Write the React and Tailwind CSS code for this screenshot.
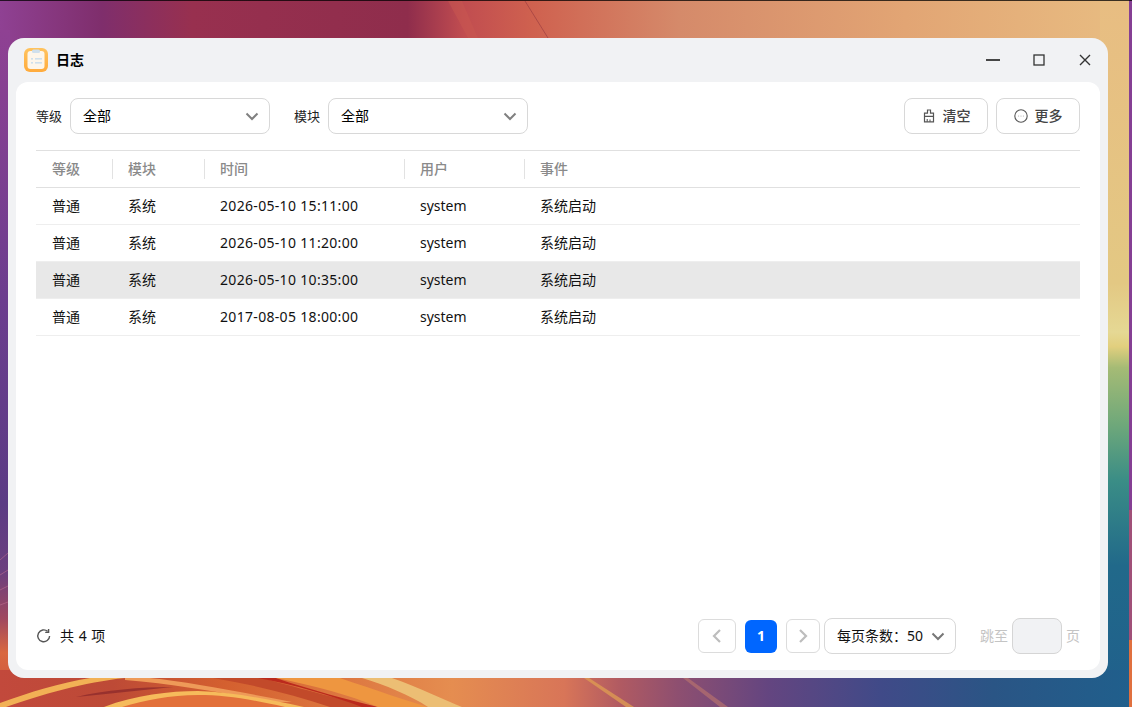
import React from "react";

function Wallpaper() {
  return (
    <svg className="absolute inset-0" width="1132" height="707" viewBox="0 0 1132 707">
      <defs>
        <linearGradient id="top" x1="0" x2="1" y1="0" y2="0">
          <stop offset="0" stopColor="#8f4193" />
          <stop offset="0.09" stopColor="#7f2e6c" />
          <stop offset="0.17" stopColor="#98304f" />
          <stop offset="0.36" stopColor="#8f2d4c" />
          <stop offset="0.41" stopColor="#c14d50" />
          <stop offset="0.47" stopColor="#cf614f" />
          <stop offset="0.6" stopColor="#d58a6a" />
          <stop offset="0.8" stopColor="#e2a574" />
          <stop offset="1" stopColor="#e8bd82" />
        </linearGradient>
        <linearGradient id="left" x1="0" x2="0" y1="0" y2="1">
          <stop offset="0" stopColor="#8f4193" />
          <stop offset="0.4" stopColor="#6b3d8e" />
          <stop offset="0.7" stopColor="#5b3b84" />
          <stop offset="0.8" stopColor="#6b3f7e" />
          <stop offset="0.87" stopColor="#a0485f" />
          <stop offset="0.92" stopColor="#d9683f" />
          <stop offset="1" stopColor="#c9503c" />
        </linearGradient>
        <linearGradient id="right" x1="0" x2="0" y1="0" y2="1">
          <stop offset="0" stopColor="#e8bd82" />
          <stop offset="0.4" stopColor="#e3c883" />
          <stop offset="0.47" stopColor="#e5d894" />
          <stop offset="0.49" stopColor="#e2cf7e" />
          <stop offset="0.52" stopColor="#a5bb75" />
          <stop offset="0.6" stopColor="#6fa87a" />
          <stop offset="0.68" stopColor="#3a8d86" />
          <stop offset="0.8" stopColor="#21698a" />
          <stop offset="1" stopColor="#205f8c" />
        </linearGradient>
        <linearGradient id="bottom" x1="0" x2="1" y1="0" y2="0">
          <stop offset="0" stopColor="#c2493c" />
          <stop offset="0.1" stopColor="#bd4a36" />
          <stop offset="0.2" stopColor="#d4602f" />
          <stop offset="0.4" stopColor="#e58d50" />
          <stop offset="0.5" stopColor="#d87558" />
          <stop offset="0.55" stopColor="#b05a62" />
          <stop offset="0.6" stopColor="#8e4f70" />
          <stop offset="0.68" stopColor="#644580" />
          <stop offset="0.78" stopColor="#404a88" />
          <stop offset="0.88" stopColor="#2a5585" />
          <stop offset="1" stopColor="#205f8c" />
        </linearGradient>
      </defs>
      <rect width="1132" height="707" fill="url(#top)" />
      <path d="M448 1 L462 1 L478 38 L468 38Z" fill="#c9584f" opacity="0.5" />
      <path d="M525 1 L548 38" stroke="#a34343" strokeWidth="0.8" />
      <rect x="0" y="30" width="10" height="677" fill="url(#left)" />
      <path d="M0 560 L8 553 M0 575 L8 570 M0 590 L8 586 M0 605 L8 602" stroke="#c27090" strokeWidth="0.8" opacity="0.7" />
      <rect x="1100" y="0" width="29" height="707" fill="url(#right)" />
      <rect x="1129" y="0" width="3" height="510" fill="#853f94" />
      <rect x="1129" y="510" width="3" height="130" fill="#a05078" />
      <rect x="1129" y="640" width="3" height="67" fill="#e0703f" />
      <rect x="0" y="670" width="1129" height="37" fill="url(#bottom)" />
      {/* lower orange body beneath the second stripe */}
      <path d="M108 707 C140 696 170 692 198 692 C240 694 270 700 300 707Z" fill="#e2703a" />
      {/* first yellow stripe */}
      <path d="M0 703 C30 692 60 683 90 678 L125 678 C85 682 40 695 6 707 L0 707Z" fill="#f2b155" />
      <path d="M125 678 L150 678 C190 682 240 692 292 702 L275 702 C230 694 175 684 125 680Z" fill="#ee9a58" />
      {/* dark streak */}
      <path d="M76 697 C105 690 140 687 173 687 C140 690 110 694 76 697Z" fill="#8f2a2c" opacity="0.8" />
      {/* second yellow stripe */}
      <path d="M104 707 C135 695 170 691 198 691 C235 692 270 700 304 707 L285 707 C250 699 225 695 198 695 C170 695 145 700 122 707Z" fill="#f6bb5b" />
      {/* diagonal bands */}
      <path d="M213 678 L262 678 C305 690 345 700 372 707 L330 707 C295 695 255 685 213 678Z" fill="#c24a2a" />
      <path d="M258 678 L276 678 C310 690 350 700 378 707 L362 707 C330 695 295 685 258 678Z" fill="#bb2a1d" />
      <path d="M276 678 L340 678 C375 690 405 700 428 707 L378 707 C350 695 315 686 276 678Z" fill="#ee9640" />
      <path d="M362 678 L392 678 C420 688 445 700 462 707 L428 707 C410 695 385 685 362 678Z" fill="#ecbe74" />
      <path d="M584 678 L589 678 L634 707 L626 707Z" fill="#dd9a52" opacity="0.8" />
      <path d="M683 678 L688 678 L728 707 L720 707Z" fill="#b5706e" opacity="0.7" />
      <rect x="0" y="0" width="1132" height="1" fill="#000" opacity="0.75" />
    </svg>
  );
}

function Chevron({ className = "" }) {
  return (
    <svg width="16" height="16" viewBox="0 0 16 16" fill="none" className={className}>
      <path d="M2.5 5.5 L8 11 L13.5 5.5" stroke="currentColor" strokeWidth="2" />
    </svg>
  );
}

function Select({ label }) {
  return (
    <div className="flex items-center gap-2">
      <span className="text-[13px] text-[#222]">{label}</span>
      <div className="flex h-9 w-[200px] items-center justify-between rounded-lg border border-[#d8d8d8] bg-white pl-3 pr-[9px]">
        <span className="text-black">全部</span>
        <Chevron className="text-[#808080]" />
      </div>
    </div>
  );
}

function Button({ icon, children }) {
  return (
    <div className="flex h-9 w-[84px] items-center justify-center gap-[7px] rounded-lg border border-[#d8d8d8] bg-white font-medium text-[#444]">
      {icon}
      <span>{children}</span>
    </div>
  );
}

const cols = "grid grid-cols-[77px_92px_200px_120px_1fr]";
const rows = [
  ["普通", "系统", "2026-05-10 15:11:00", "system", "系统启动"],
  ["普通", "系统", "2026-05-10 11:20:00", "system", "系统启动"],
  ["普通", "系统", "2026-05-10 10:35:00", "system", "系统启动"],
  ["普通", "系统", "2017-08-05 18:00:00", "system", "系统启动"],
];
const heads = ["等级", "模块", "时间", "用户", "事件"];

function Table() {
  return (
    <div className="mt-4 border-t border-[#e0e0e0]">
      <div className={`${cols} h-[37px] items-center border-b border-[#e0e0e0] font-medium text-[#8a8a8a]`}>
        {heads.map((h, i) => (
          <div key={h} className={`flex items-center justify-between ${i === 0 ? "pl-4" : "pl-[15px]"}`}>
            <span>{h}</span>
            {i < 4 && <span className="h-5 w-px bg-[#e2e2e2]" />}
          </div>
        ))}
      </div>
      {rows.map((r, idx) => (
        <div key={idx} className={`${cols} h-[37px] items-center border-b border-[#eeeeee] text-[#111] ${idx === 2 ? "bg-[#e8e8e8]" : ""}`}>
          {r.map((c, i) => (
            <div key={i} className={`${i === 0 ? "pl-4" : "pl-[15px]"} ${i === 2 ? "tracking-[0.32px]" : ""}`}>{c}</div>
          ))}
        </div>
      ))}
    </div>
  );
}

function Footer() {
  return (
    <div className="mt-auto mb-4 flex h-9 items-center">
      <svg width="16" height="16" viewBox="0 0 16 16" fill="none" className="text-[#555]">
        <path d="M13.6 8 A5.9 5.9 0 1 1 11.6 3.4" stroke="currentColor" strokeWidth="1.4" />
        <path d="M12.6 1 V4.4 H9.2" stroke="currentColor" strokeWidth="1.4" />
      </svg>
      <span className="ml-2 text-[#111] [word-spacing:1px]">共 4 项</span>
      <div className="ml-auto flex items-center">
        <div className="flex h-[34px] w-[38px] items-center justify-center rounded-md border border-[#dcdcdc] text-[#bdbdbd]">
          <svg width="14" height="16" viewBox="0 0 14 16" fill="none"><path d="M10 2 L4 8 L10 14" stroke="currentColor" strokeWidth="2.2" /></svg>
        </div>
        <div className="ml-[9px] flex h-[33px] w-8 items-center justify-center rounded-md bg-[#0066ff] font-bold text-white">1</div>
        <div className="ml-[9px] flex h-[34px] w-[34px] items-center justify-center rounded-md border border-[#dcdcdc] text-[#bdbdbd]">
          <svg width="14" height="16" viewBox="0 0 14 16" fill="none"><path d="M4 2 L10 8 L4 14" stroke="currentColor" strokeWidth="2.2" /></svg>
        </div>
        <div className="ml-1 flex h-9 w-[132px] items-center justify-between rounded-lg border border-[#d8d8d8] pl-3 pr-[9px] text-[#111]">
          <span className="whitespace-nowrap">每页条数：50</span>
          <Chevron className="text-[#777]" />
        </div>
        <span className="ml-6 text-[#c4c4c4]">跳至</span>
        <div className="ml-1 h-9 w-[50px] rounded-lg border border-[#d5d5d5] bg-[#f1f2f4]" />
        <span className="ml-1 text-[#c4c4c4]">页</span>
      </div>
    </div>
  );
}

function AppIcon() {
  return (
    <svg width="24" height="24" viewBox="0 0 24 24">
      <defs>
        <linearGradient id="ai" x1="0" x2="0" y1="0" y2="1">
          <stop offset="0" stopColor="#ffc35e" />
          <stop offset="1" stopColor="#ffab3c" />
        </linearGradient>
      </defs>
      <rect width="24" height="24" rx="6" fill="url(#ai)" />
      <rect x="3.5" y="3" width="17" height="18" rx="3" fill="#fdf6ea" />
      <rect x="8" y="1.5" width="8" height="3.5" rx="1.5" fill="#cfe0ec" />
      <rect x="7" y="10" width="2" height="1.6" fill="#cfe0ec" />
      <rect x="11" y="10" width="7" height="1.6" fill="#cfe0ec" />
      <rect x="7" y="14" width="2" height="1.6" fill="#cfe0ec" />
      <rect x="11" y="14" width="7" height="1.6" fill="#cfe0ec" />
    </svg>
  );
}

export default function App() {
  return (
    <div className="relative h-[707px] w-[1132px] overflow-hidden text-sm font-['Noto_Sans','Noto_Sans_CJK_SC',sans-serif]">
      <Wallpaper />
      <div className="absolute left-2 top-[38px] flex h-[640px] w-[1100px] flex-col rounded-2xl bg-[#f1f2f4]">
        <div className="flex h-11 shrink-0 items-center pl-4">
          <AppIcon />
          <span className="ml-2 font-bold text-black">日志</span>
          <div className="ml-auto flex items-center text-[#333]">
            <svg width="16" height="16" viewBox="0 0 16 16" fill="none" className="mr-8"><path d="M1 8 H15" stroke="currentColor" strokeWidth="1.8" /></svg>
            <svg width="12" height="12" viewBox="0 0 12 12" fill="none" className="mr-[34px]"><rect x="1" y="1" width="10" height="10" stroke="currentColor" strokeWidth="1.3" /></svg>
            <svg width="12" height="12" viewBox="0 0 12 12" fill="none" className="mr-[17px]"><path d="M1 1 L11 11 M11 1 L1 11" stroke="currentColor" strokeWidth="1.4" /></svg>
          </div>
        </div>
        <div className="mx-2 mb-2 flex flex-1 flex-col rounded-xl bg-white px-5 pt-4">
          <div className="flex h-9 items-center">
            <Select label="等级" />
            <div className="ml-6"><Select label="模块" /></div>
            <div className="ml-auto flex gap-2">
              <Button icon={
                <svg width="14" height="14" viewBox="0 0 14 14" fill="none" className="text-[#555]">
                  <path d="M5.5 4.2 V1 H8.5 V4.2 H11.5 V12.8 H2.5 V4.2 Z" stroke="currentColor" strokeWidth="1.2" />
                  <path d="M2.5 7.4 H11.5 M5.2 12.8 V10 M8 12.8 V10.5" stroke="currentColor" strokeWidth="1.1" />
                </svg>
              }>清空</Button>
              <Button icon={
                <svg width="14" height="14" viewBox="0 0 14 14" fill="none" className="text-[#555]">
                  <circle cx="7" cy="7" r="6.2" stroke="currentColor" strokeWidth="1.1" />
                  <circle cx="4.6" cy="7" r=".6" fill="#aaa" /><circle cx="7" cy="7" r=".6" fill="#aaa" /><circle cx="9.4" cy="7" r=".6" fill="#aaa" />
                </svg>
              }>更多</Button>
            </div>
          </div>
          <Table />
          <Footer />
        </div>
      </div>
    </div>
  );
}
